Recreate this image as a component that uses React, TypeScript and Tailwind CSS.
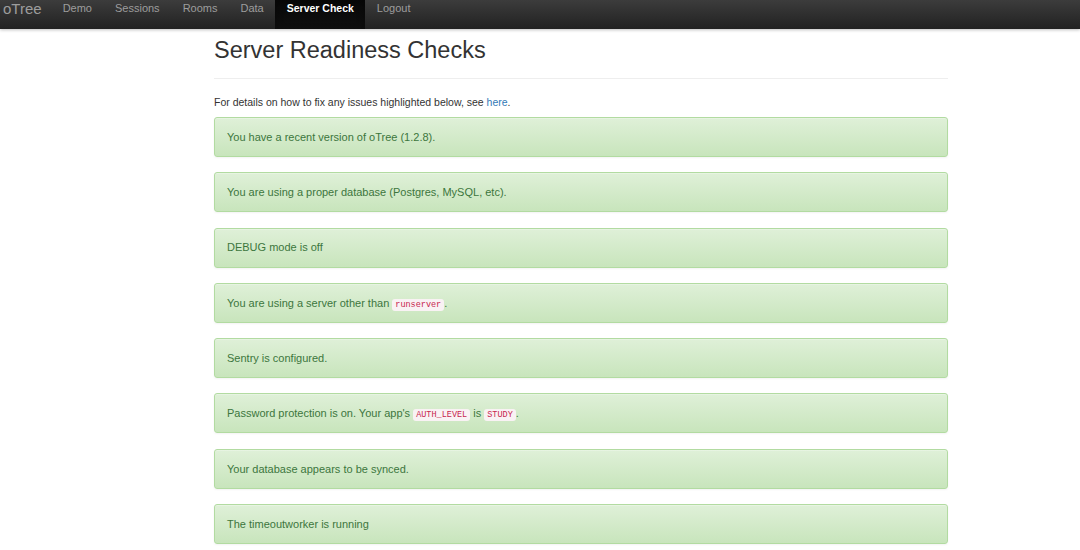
import type { ReactNode } from "react";

function Code({ children }: { children: ReactNode }) {
  return (
    <code className="rounded-[3px] bg-[#f9f2f4] px-[3px] py-[1px] font-['Liberation_Mono',monospace] text-[8.5px] text-[#c7254e]">
      {children}
    </code>
  );
}

function Alert({ children }: { children: ReactNode }) {
  return (
    <div className="flex h-[40px] items-center rounded-[3px] border border-[#b2dba1] bg-gradient-to-b from-[#dff0d8] to-[#c8e5bc] px-[12px] text-[#3c763d] shadow-[inset_0_1px_0_rgba(255,255,255,0.25),0_1px_2px_rgba(0,0,0,0.05)]">
      <span>{children}</span>
    </div>
  );
}

const navItems = ["Demo", "Sessions", "Rooms", "Data", "Server Check", "Logout"];

export default function App() {
  return (
    <div className="min-h-[550px] bg-white font-['Liberation_Sans',Arial,sans-serif] text-[11px] text-[#333]">
      <div className="flex h-[29px] items-stretch bg-gradient-to-b from-[#3c3c3c] to-[#222] shadow-[0_1px_3px_rgba(0,0,0,0.25)]">
        <div className="pl-[3px] pr-[9.5px] pt-[1px] text-[15px] leading-[15px] text-[#9d9d9d]">oTree</div>
        {navItems.map((item) => {
          const active = item === "Server Check";
          return (
            <div
              key={item}
              className={
                active
                  ? "bg-gradient-to-b from-[#080808] to-[#0f0f0f] px-[11.5px] pt-[2px] text-[10.5px] leading-[13px] font-bold text-white shadow-[inset_0_3px_9px_rgba(0,0,0,0.25)]"
                  : "px-[11.5px] pt-[2px] leading-[13px] text-[#9d9d9d]"
              }
            >
              {item}
            </div>
          );
        })}
      </div>

      <div className="ml-[214px] w-[734px]">
        <div className="border-b border-[#eee] pb-[13px] pt-[7px] text-[23.5px] leading-[29px] text-[#333]">
          Server Readiness Checks
        </div>
        <p className="mb-[7px] mt-[16px] text-[10.5px] leading-[15px]">
          For details on how to fix any issues highlighted below, see{" "}
          <a className="text-[#337ab7]">here</a>.
        </p>
        <div className="flex flex-col gap-[15.3px]">
          <Alert>You have a recent version of oTree (1.2.8).</Alert>
          <Alert>You are using a proper database (Postgres, MySQL, etc).</Alert>
          <Alert>DEBUG mode is off</Alert>
          <Alert>
            You are using a server other than <Code>runserver</Code>.
          </Alert>
          <Alert>Sentry is configured.</Alert>
          <Alert>
            Password protection is on. Your app's <Code>AUTH_LEVEL</Code> is{" "}
            <Code>STUDY</Code>.
          </Alert>
          <Alert>Your database appears to be synced.</Alert>
          <Alert>The timeoutworker is running</Alert>
        </div>
      </div>
    </div>
  );
}
